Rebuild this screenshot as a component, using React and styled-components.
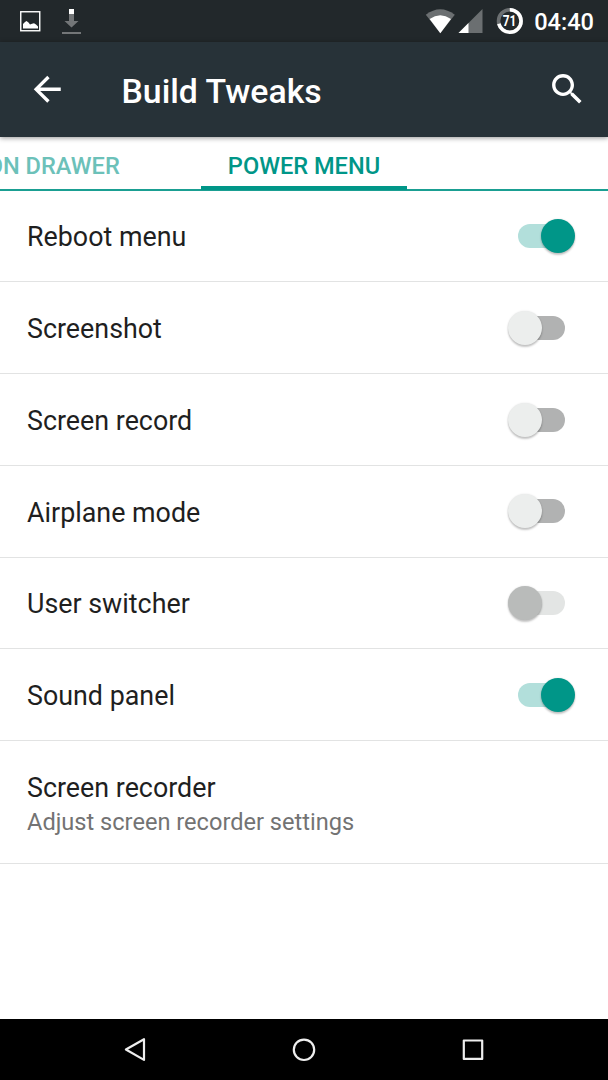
import React from "react";
import styled, { createGlobalStyle } from "styled-components";

const GlobalStyle = createGlobalStyle`
  * { box-sizing: border-box; }
  body { margin: 0; background: #fff; font-family: Roboto, sans-serif; }
`;

const Screen = styled.div`
  display: flex;
  flex-direction: column;
  width: 608px;
  height: 1080px;
  overflow: hidden;
  background: #fff;
`;

const StatusBar = styled.div`
  display: flex;
  flex: none;
  align-items: center;
  justify-content: space-between;
  height: 42px;
  padding: 0 14px 0 20px;
  background: #22282b;
`;

const StatusGroup = styled.div`
  display: flex;
  align-items: center;
  gap: ${(p) => p.$gap}px;
`;

const StatusIcon = styled.svg`
  display: block;
  margin-right: ${(p) => p.$after || 0}px;
`;

const Clock = styled.span`
  font-size: 23.6px;
  font-weight: 500;
  line-height: 28px;
  padding-top: 2px;
  color: #fff;
`;

const Toolbar = styled.header`
  display: flex;
  flex: none;
  align-items: center;
  height: 94.5px;
  padding: 0.5px 20.5px 0 27px;
  background: #273238;
  box-shadow: 0 1px 5px rgba(0, 0, 0, 0.42);
  z-index: 1;
`;

const ToolbarIcon = styled.svg`
  display: block;
  flex: none;
  width: 40.5px;
  height: 40.5px;
  fill: #fff;
`;

const Title = styled.h1`
  flex: 1;
  margin: 0 0 0 54px;
  padding-top: 4px;
  font-size: 33.8px;
  font-weight: 500;
  line-height: 40px;
  color: #fff;
`;

const TabStrip = styled.nav`
  display: flex;
  flex: none;
  justify-content: center;
  height: 54px;
  border-bottom: 2px solid #1a9f92;
`;

const Tab = styled.div`
  display: flex;
  flex: none;
  align-items: center;
  justify-content: ${(p) => (p.$active ? "center" : "flex-end")};
  width: ${(p) => p.$width}px;
  height: 53px;
  padding: 9px 27px 0;
  font-size: 23.6px;
  font-weight: 500;
  white-space: nowrap;
  color: ${(p) => (p.$active ? "#009688" : "#6cc1b9")};
  border-bottom: 4.5px solid ${(p) => (p.$active ? "#009688" : "transparent")};
`;

const TabGap = styled.div`
  flex: none;
  width: ${(p) => p.$width}px;
`;

const List = styled.main`
  flex: 1;
`;

const Row = styled.div`
  display: flex;
  align-items: center;
  justify-content: space-between;
  height: ${(p) => (p.$tall ? 123 : 91.75)}px;
  padding: 0 32px 0 27px;
  border-bottom: 1.5px solid #e2e3e3;
`;

const RowText = styled.div`
  display: flex;
  flex-direction: column;
  padding-top: 3px;
`;

const RowTitle = styled.span`
  font-size: 26.85px;
  line-height: 32px;
  color: #1f1f1f;
`;

const RowSummary = styled.span`
  margin-top: 4px;
  font-size: 23.6px;
  line-height: 28px;
  color: #737373;
`;

const tracks = { on: "#b2dfdb", off: "#b1b2b2", disabled: "#e3e5e4" };
const thumbs = { on: "#009688", off: "#eceeed", disabled: "#b9bbba" };

const Track = styled.div`
  position: relative;
  width: 47px;
  height: 24px;
  margin: 0.5px 11px 0 0;
  border-radius: 12px;
  background: ${(p) => tracks[p.$state]};
`;

const Thumb = styled.div`
  position: absolute;
  top: -5px;
  left: ${(p) => (p.$state === "on" ? 23 : -10)}px;
  width: 34px;
  height: 34px;
  border-radius: 50%;
  background: ${(p) => thumbs[p.$state]};
  box-shadow: 0 2px 2px rgba(0, 0, 0, 0.22), 0 0 2px rgba(0, 0, 0, 0.12);
`;

const NavBar = styled.footer`
  display: flex;
  flex: none;
  align-items: center;
  justify-content: center;
  gap: 139px;
  height: 61px;
  background: #000;
`;

const NavIcon = styled.svg`
  display: block;
  width: 30px;
  height: 30px;
  fill: none;
  stroke: #eee;
  stroke-width: 2.2;
  stroke-linejoin: round;
`;

const settings = [
  { title: "Reboot menu", state: "on" },
  { title: "Screenshot", state: "off" },
  { title: "Screen record", state: "off" },
  { title: "Airplane mode", state: "off" },
  { title: "User switcher", state: "disabled" },
  { title: "Sound panel", state: "on" },
  { title: "Screen recorder", summary: "Adjust screen recorder settings" },
];

function Switch({ state }) {
  return (
    <Track $state={state}>
      <Thumb $state={state} />
    </Track>
  );
}

function Status() {
  return (
    <StatusBar>
      <StatusGroup $gap={21}>
        <StatusIcon width="21" height="22" viewBox="0 0 21 22">
          <rect x="0.75" y="1.75" width="19" height="19" fill="none" stroke="#fff" strokeWidth="1.4" />
          <path d="M3 18.5V14L5 12L6.5 11L8.5 12.5L10 14.5L12 13.8L14 13.2L16 14.5L18 16.5V18.5Z" fill="#fff" />
        </StatusIcon>
        <StatusIcon width="19" height="26" viewBox="0 0 19 26">
          <path d="M7 6H12V13H16.5L9.5 19.5L2.5 13H7ZM0 24H19V26H0Z" fill="#737678" />
          <path d="M7 1H12V6H7Z" fill="#fff" />
        </StatusIcon>
      </StatusGroup>
      <StatusGroup $gap={0}>
        <StatusIcon $after={3} width="30" height="26" viewBox="0 0 30 26">
          <path d="M0.8 6.8Q15.2-4.2 29.8 6.8L15.3 25.2Z" fill="#6b6f71" />
          <path d="M4.6 11Q15.3 3.6 26 11L15.3 25.2Z" fill="#fff" />
        </StatusIcon>
        <StatusIcon $after={13} width="25" height="26" viewBox="0 0 25 26">
          <path d="M0.5 25L24.5 1V25Z" fill="#6b6f71" />
          <path d="M0.5 25L10.5 15V25Z" fill="#fff" />
        </StatusIcon>
        <StatusIcon $after={11} width="27" height="28" viewBox="0 0 27 28">
          <circle cx="13.8" cy="14" r="11.3" fill="none" stroke="#6b6f71" strokeWidth="3.6" />
          <circle
            cx="13.8"
            cy="14"
            r="11.3"
            fill="none"
            stroke="#fff"
            strokeWidth="3.6"
            pathLength="100"
            strokeDasharray="71 29"
            transform="rotate(-90 13.8 14)"
          />
          <text
            transform="translate(13.6 19) scale(0.82 1)"
            fontSize="14.4"
            fontWeight="700"
            fill="#fff"
            textAnchor="middle"
          >
            71
          </text>
        </StatusIcon>
        <Clock>04:40</Clock>
      </StatusGroup>
    </StatusBar>
  );
}

export default function App() {
  return (
    <Screen>
      <GlobalStyle />
      <Status />
      <Toolbar>
        <ToolbarIcon viewBox="0 0 24 24">
          <path d="M20 11H7.83l5.59-5.59L12 4l-8 8 8 8 1.41-1.41L7.83 13H20v-2z" />
        </ToolbarIcon>
        <Title>Build Tweaks</Title>
        <ToolbarIcon viewBox="0 0 24 24">
          <path d="M15.5 14h-.79l-.28-.27C15.41 12.59 16 11.11 16 9.5 16 5.91 13.09 3 9.5 3S3 5.91 3 9.5 5.91 16 9.5 16c1.61 0 3.09-.59 4.23-1.57l.27.28v.79l5 4.99L20.49 19l-4.99-5zm-6 0C7.01 14 5 11.99 5 9.5S7.01 5 9.5 5 14 7.01 14 9.5 11.99 14 9.5 14z" />
        </ToolbarIcon>
      </Toolbar>
      <TabStrip>
        <Tab $width={330}>NOTIFICATION DRAWER</Tab>
        <TabGap $width={54} />
        <Tab $active $width={206.5}>
          POWER MENU
        </Tab>
        <TabGap $width={384} />
      </TabStrip>
      <List>
        {settings.map((item) => (
          <Row key={item.title} $tall={Boolean(item.summary)}>
            <RowText>
              <RowTitle>{item.title}</RowTitle>
              {item.summary && <RowSummary>{item.summary}</RowSummary>}
            </RowText>
            {item.state && <Switch state={item.state} />}
          </Row>
        ))}
      </List>
      <NavBar>
        <NavIcon viewBox="0 0 30 30">
          <path d="M5.9 14.5L24 4.2V24.9Z" />
        </NavIcon>
        <NavIcon viewBox="0 0 30 30">
          <circle cx="15" cy="14.8" r="10.2" />
        </NavIcon>
        <NavIcon viewBox="0 0 30 30">
          <rect x="5.8" y="5.5" width="18.4" height="18.4" />
        </NavIcon>
      </NavBar>
    </Screen>
  );
}
